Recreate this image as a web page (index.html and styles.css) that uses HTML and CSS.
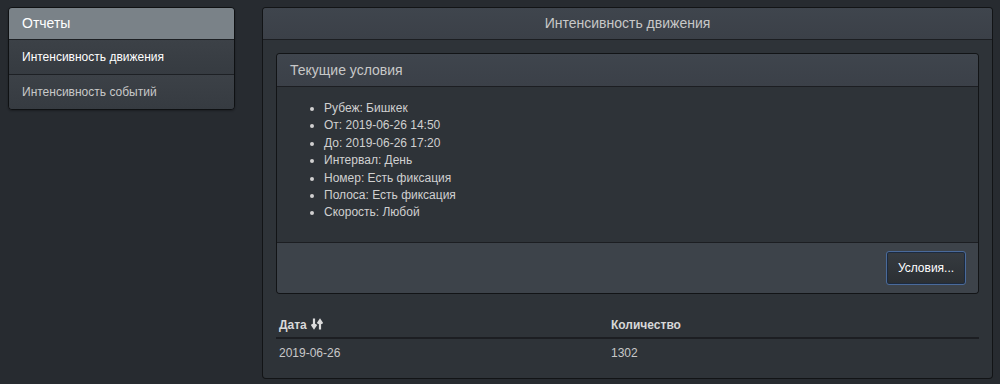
FILE: index.html
```html
<!DOCTYPE html>
<html lang="ru">
<head>
  <meta charset="UTF-8" />
  <title>Отчеты</title>
  <link rel="stylesheet" href="styles.css">
</head>
<body>
  <div class="layout">
    <div class="sidebar">
      <div class="side-item active">Отчеты</div>
      <div class="side-item current">Интенсивность движения</div>
      <div class="side-item">Интенсивность событий</div>
    </div>

    <div class="panel main-panel">
      <div class="panel-heading center">Интенсивность движения</div>
      <div class="panel-body">
        <div class="panel inner-panel">
          <div class="panel-heading">Текущие условия</div>
          <div class="inner-body">
            <ul class="cond-list">
              <li>Рубеж: Бишкек</li>
              <li>От: 2019-06-26 14:50</li>
              <li>До: 2019-06-26 17:20</li>
              <li>Интервал: День</li>
              <li>Номер: Есть фиксация</li>
              <li>Полоса: Есть фиксация</li>
              <li>Скорость: Любой</li>
            </ul>
          </div>
          <div class="panel-footer">
            <button class="btn">Условия...</button>
          </div>
        </div>

        <table class="data-table">
          <thead>
            <tr>
              <th class="col-date">Дата
                <svg class="sort-icon" width="12" height="12" viewBox="0 0 12 12">
                  <path d="M3 0.5v8M0.7 6.3L3 9.7L5.3 6.3" fill="none" stroke="#dcdcdc" stroke-width="2.2"/>
                  <path d="M9 11.5v-8M6.7 5.7L9 2.3L11.3 5.7" fill="none" stroke="#dcdcdc" stroke-width="2.2"/>
                </svg>
              </th>
              <th>Количество</th>
            </tr>
          </thead>
          <tbody>
            <tr>
              <td>2019-06-26</td>
              <td>1302</td>
            </tr>
          </tbody>
        </table>
      </div>
    </div>
  </div>
</body>
</html>
```
FILE: styles.css
```css
* {
  box-sizing: border-box;
}

html, body {
  margin: 0;
  padding: 0;
  background-color: #272b30;
  font-family: 'Liberation Sans', Arial, sans-serif;
  font-size: 12px;
  color: #c8c8c8;
}

.layout {
  display: flex;
  align-items: flex-start;
  padding: 7px 7px 0 8px;
}

/* левое меню */
.sidebar {
  width: 227px;
  border: 1px solid rgba(0, 0, 0, 0.6);
  border-radius: 4px;
  overflow: hidden;
  box-shadow: 0 1px 2px rgba(0, 0, 0, 0.3);
}
.side-item {
  height: 35px;
  line-height: 34px;
  padding: 0 13px;
  background: linear-gradient(#3c4147, #363b41);
  border-top: 1px solid #1d2024;
  color: #c8c8c8;
}
.side-item.active {
  height: 31px;
  line-height: 31px;
  border-top: none;
  background: #7a8288;
  color: #fff;
  font-size: 14px;
}
.side-item.current {
  color: #fff;
}

/* панели */
.panel {
  background: #2e3338;
  border: 1px solid rgba(0, 0, 0, 0.6);
  border-radius: 4px;
}
.main-panel {
  flex: 1;
  margin-left: 27px;
}
.panel-heading {
  height: 32px;
  line-height: 31px;
  padding: 0 13px;
  background: linear-gradient(#3f454d, #3b4048);
  border-bottom: 1px solid #1c1e22;
  font-size: 14px;
  color: #c8c8c8;
  border-radius: 3px 3px 0 0;
}
.panel-heading.center {
  text-align: center;
}
.panel-body {
  padding: 13px 13px 11px;
}

.inner-panel .panel-heading {
  height: 33px;
  line-height: 32px;
}
.inner-body {
  padding: 13px 13px 0;
  height: 155px;
}
.cond-list {
  margin: 0;
  padding-left: 34px;
  line-height: 17.4px;
  color: #d0d0d0;
}
.panel-footer {
  display: flex;
  justify-content: flex-end;
  height: 51px;
  padding: 8px 12px 0;
  background: #3d434a;
  border-top: 1px solid #1c1e22;
  border-radius: 0 0 3px 3px;
}
.btn {
  height: 34px;
  width: 80px;
  padding: 0;
  font-family: inherit;
  font-size: 12px;
  color: #fff;
  background: linear-gradient(#363b40, #2b2f33);
  border: 1px solid #4a6a9a;
  border-radius: 3px;
  box-shadow: inset 0 0 0 1px #1c2a3e;
}

/* таблица */
.data-table {
  width: 100%;
  margin-top: 20px;
  border-collapse: collapse;
}
.data-table th {
  text-align: left;
  font-weight: bold;
  color: #d8d8d8;
  padding: 4px 3px 5px;
  border-bottom: 2px solid #1c1e22;
}
.data-table .col-date {
  width: 332px;
}
.data-table td {
  padding: 7px 3px;
  height: 14px;
  color: #c8c8c8;
}
.sort-icon {
  vertical-align: -1px;
  margin-left: 1px;
}
```
